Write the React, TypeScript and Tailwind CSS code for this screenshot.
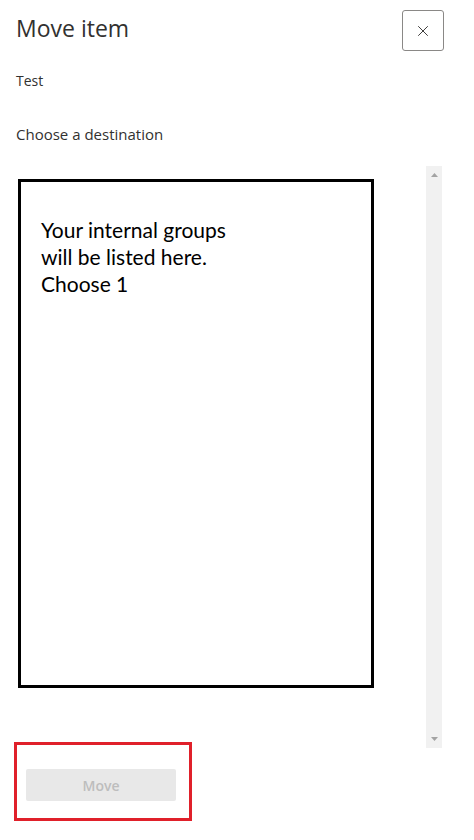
import { X } from "lucide-react";

const uiFont = "font-['Open_Sans',sans-serif]";

export default function App() {
  return (
    <div className={`w-[474px] h-[840px] bg-white text-[#323130] ${uiFont}`}>
      <header className="flex items-start justify-between pt-[10px] pl-4 pr-[30px]">
        <h1 className="mt-[2px] text-[23px] leading-[32px] font-normal">Move item</h1>
        <button
          type="button"
          aria-label="Close"
          className="flex h-[41px] w-[42px] items-center justify-center rounded-[3px] border border-[#8a8886] bg-white"
        >
          <X className="h-[18px] w-[18px] text-[#323130]" strokeWidth={1.25} />
        </button>
      </header>

      <p className="mt-[20px] pl-4 text-[14px] leading-[20px]">Test</p>
      <p className="mt-[33px] pl-4 text-[15px] leading-[20px]">Choose a destination</p>

      <div className="mt-[22px] flex">
        <div className="flex flex-col pl-[14px] pt-[13px]">
          <div className="ml-[4px] h-[509px] w-[356px] border-[3px] border-black bg-white px-[20px] pt-[34px]">
            <p className="font-['Lato',sans-serif] text-[21px] leading-[27px] text-black">
              Your internal groups
              <br />
              will be listed here.
              <br />
              Choose 1
            </p>
          </div>

          <div className="mt-[54px] h-[79px] w-[178px] border-[3px] border-[#e0202a] pl-[9px] pt-[24px]">
            <button
              type="button"
              disabled
              className="h-[32px] w-[150px] rounded-[2px] bg-[#e8e8e8] text-[14px] font-semibold text-[#bdbdbd]"
            >
              Move
            </button>
          </div>
        </div>

        <div className="ml-auto mr-[32px] flex h-[582px] w-[16px] flex-col items-center justify-between bg-[#f1f1f1] py-[7px]">
          <svg width="7" height="4" viewBox="0 0 7 4" className="fill-[#a3a3a3]">
            <polygon points="3.5,0 7,4 0,4" />
          </svg>
          <svg width="7" height="4" viewBox="0 0 7 4" className="fill-[#a3a3a3]">
            <polygon points="0,0 7,0 3.5,4" />
          </svg>
        </div>
      </div>
    </div>
  );
}
